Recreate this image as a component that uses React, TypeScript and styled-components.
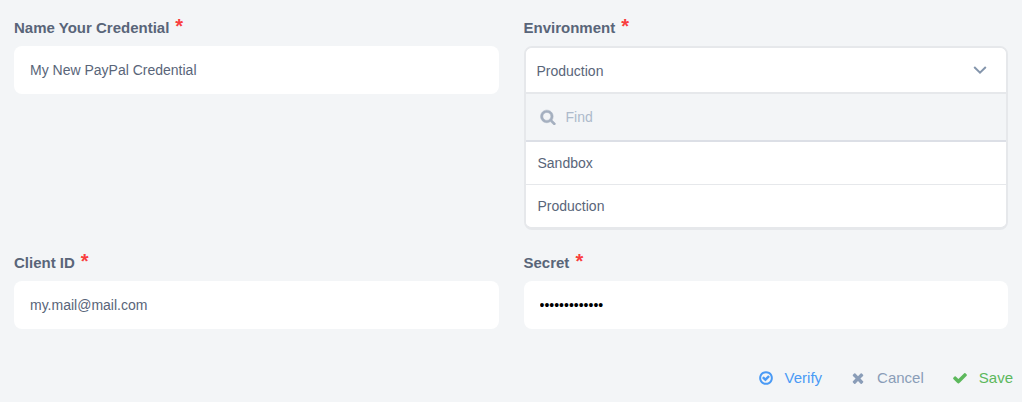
import React, { useState } from "react";
import styled, { createGlobalStyle } from "styled-components";

const GlobalStyle = createGlobalStyle`
  *, *::before, *::after { box-sizing: border-box; }
  body {
    margin: 0;
    background: #f3f5f7;
    color: #596579;
    font: 14px/20px "Liberation Sans", Arial, sans-serif;
  }
`;

const Form = styled.form`
  padding: 16px 0;
`;

const Fields = styled.div`
  display: grid;
  grid-template-columns: 1fr 1fr;
  gap: 21px 25px;
  padding: 0 14px;
`;

const Field = styled.div`
  min-width: 0;
`;

const Label = styled.label`
  display: flex;
  gap: 6px;
  height: 24px;
  margin-bottom: 6px;
  font-size: 15px;
  font-weight: 700;
  line-height: 24px;
`;

const Required = styled.span`
  color: #f93e3e;
  font-size: 20px;
  line-height: 20px;
`;

const TextInput = styled.input`
  display: block;
  width: 100%;
  height: 48px;
  padding: 0 16px;
  border: 0;
  border-radius: 8px;
  background: #fff;
  color: ${(p) => (p.type === "password" ? "#000" : "#596579")};
  font: inherit;
  outline: none;
`;

const Dropdown = styled.div`
  overflow: hidden;
  border: 2px solid #e6e8eb;
  border-bottom-width: 3px;
  border-radius: 8px;
  background: #fff;
`;

const SelectRow = styled.div`
  display: grid;
  align-items: center;
  border-bottom: 2px solid #e6e8eb;

  & > * {
    grid-area: 1 / 1;
  }

  & > svg {
    justify-self: end;
    margin-right: 19px;
    pointer-events: none;
  }
`;

const Select = styled.select`
  appearance: none;
  width: 100%;
  height: 44px;
  padding: 2px 11px 0;
  border: 0;
  background: #fff;
  color: inherit;
  font: inherit;
  outline: none;
`;

const SearchRow = styled.div`
  display: flex;
  align-items: center;
  gap: 10px;
  height: 48px;
  padding: 0 14px;
  border-bottom: 2px solid #dcdfe6;
  background: #f3f5f7;
  color: #a5b0c0;
`;

const SearchInput = styled.input`
  flex: 1;
  min-width: 0;
  padding: 0;
  border: 0;
  background: transparent;
  color: #596579;
  font: inherit;
  outline: none;

  &::placeholder {
    color: #adbacb;
    opacity: 1;
  }
`;

const Options = styled.ul`
  margin: 0;
  padding: 0;
  list-style: none;
`;

const OptionItem = styled.li`
  & + & {
    border-top: 1px solid #e6e8eb;
  }
`;

const OptionButton = styled.button`
  display: block;
  width: 100%;
  height: 42px;
  padding: 0 12px;
  border: 0;
  background: #fff;
  color: inherit;
  font: inherit;
  text-align: left;
`;

const Actions = styled.div`
  display: flex;
  justify-content: flex-end;
  gap: 28px;
  margin-top: 37px;
  padding: 0 9px;
`;

const Action = styled.button<{ $color: string }>`
  display: flex;
  align-items: center;
  gap: 11px;
  padding: 0;
  border: 0;
  background: none;
  color: ${(p) => p.$color};
  font: inherit;
  font-size: 15px;
  line-height: 24px;
`;

const Glyph = styled.svg`
  display: block;
  flex: none;
  fill: currentColor;
  stroke: currentColor;
`;

const icons = {
  search:
    "M1216 832q0-185-131.5-316.5t-316.5-131.5-316.5 131.5-131.5 316.5 131.5 316.5 316.5 131.5 316.5-131.5 131.5-316.5zm512 832q0 52-38 90t-90 38q-54 0-90-38l-343-342q-179 124-399 124-143 0-273.5-55.5t-225-150-150-225-55.5-273.5 55.5-273.5 150-225 225-150 273.5-55.5 273.5 55.5 225 150 150 225 55.5 273.5q0 220-124 399l343 343q37 37 37 90z",
  check:
    "M1671 566q0 40-28 68l-724 724-136 136q-28 28-68 28t-68-28l-136-136-362-362q-28-28-28-68t28-68l136-136q28-28 68-28t68 28l294 295 656-657q28-28 68-28t68 28l136 136q28 28 28 68z",
  times:
    "M1490 1322q0 40-28 68l-136 136q-28 28-68 28t-68-28l-294-294-294 294q-28 28-68 28t-68-28l-136-136q-28-28-28-68t28-68l294-294-294-294q-28-28-28-68t28-68l136-136q28-28 68-28t68 28l294 294 294-294q28-28 68-28t68 28l136 136q28 28 28 68t-28 68l-294 294 294 294q28 28 28 68z",
  verify:
    "M1299 813l-422 422q-19 19-45 19t-45-19l-294-294q-19-19-19-45t19-45l102-102q19-19 45-19t45 19l147 147 275-275q19-19 45-19t45 19l102 102q19 19 19 45t-19 45zm141 83q0-148-73-273t-198-198-273-73-273 73-198 198-73 273 73 273 198 198 273 73 273-73 198-198 73-273zm224 0q0 209-103 385.5t-279.5 279.5-385.5 103-385.5-103-279.5-279.5-103-385.5 103-385.5 279.5-279.5 385.5-103 385.5 103 279.5 279.5 103 385.5z",
};

function Icon({ name, weight = 0 }: { name: keyof typeof icons; weight?: number }) {
  return (
    <Glyph width="16" height="16" viewBox="0 0 1792 1792" strokeWidth={weight} aria-hidden="true">
      <path d={icons[name]} />
    </Glyph>
  );
}

function FieldLabel({ htmlFor, children }: { htmlFor: string; children: string }) {
  return (
    <Label htmlFor={htmlFor}>
      {children}
      <Required>*</Required>
    </Label>
  );
}

const environments = ["Sandbox", "Production"];

export default function App() {
  const [environment, setEnvironment] = useState("Production");
  const [query, setQuery] = useState("");
  const matches = environments.filter((e) => e.toLowerCase().includes(query.toLowerCase()));

  return (
    <>
      <GlobalStyle />
      <Form onSubmit={(e) => e.preventDefault()}>
        <Fields>
          <Field>
            <FieldLabel htmlFor="name">Name Your Credential</FieldLabel>
            <TextInput id="name" type="text" defaultValue="My New PayPal Credential" />
          </Field>
          <Field>
            <FieldLabel htmlFor="environment">Environment</FieldLabel>
            <Dropdown>
              <SelectRow>
                <Select
                  id="environment"
                  value={environment}
                  onChange={(e) => setEnvironment(e.target.value)}
                >
                  {environments.map((e) => (
                    <option key={e}>{e}</option>
                  ))}
                </Select>
                <svg width="14" height="8" viewBox="0 0 14 8" fill="none" stroke="#8495ac" strokeWidth="2" aria-hidden="true">
                  <path d="M1.2 1 7 6.6 12.8 1" />
                </svg>
              </SelectRow>
              <SearchRow>
                <Icon name="search" weight={60} />
                <SearchInput
                  type="text"
                  aria-label="Find"
                  placeholder="Find"
                  value={query}
                  onChange={(e) => setQuery(e.target.value)}
                />
              </SearchRow>
              <Options>
                {matches.map((e) => (
                  <OptionItem key={e}>
                    <OptionButton type="button" onClick={() => setEnvironment(e)}>
                      {e}
                    </OptionButton>
                  </OptionItem>
                ))}
              </Options>
            </Dropdown>
          </Field>
          <Field>
            <FieldLabel htmlFor="client-id">Client ID</FieldLabel>
            <TextInput id="client-id" type="text" defaultValue="my.mail@mail.com" />
          </Field>
          <Field>
            <FieldLabel htmlFor="secret">Secret</FieldLabel>
            <TextInput id="secret" type="password" defaultValue="secret-value1" />
          </Field>
        </Fields>
        <Actions>
          <Action type="button" $color="#4a9af5">
            <Icon name="verify" />
            Verify
          </Action>
          <Action type="button" $color="#8a9db8">
            <Icon name="times" />
            Cancel
          </Action>
          <Action type="submit" $color="#5cb85c">
            <Icon name="check" />
            Save
          </Action>
        </Actions>
      </Form>
    </>
  );
}
